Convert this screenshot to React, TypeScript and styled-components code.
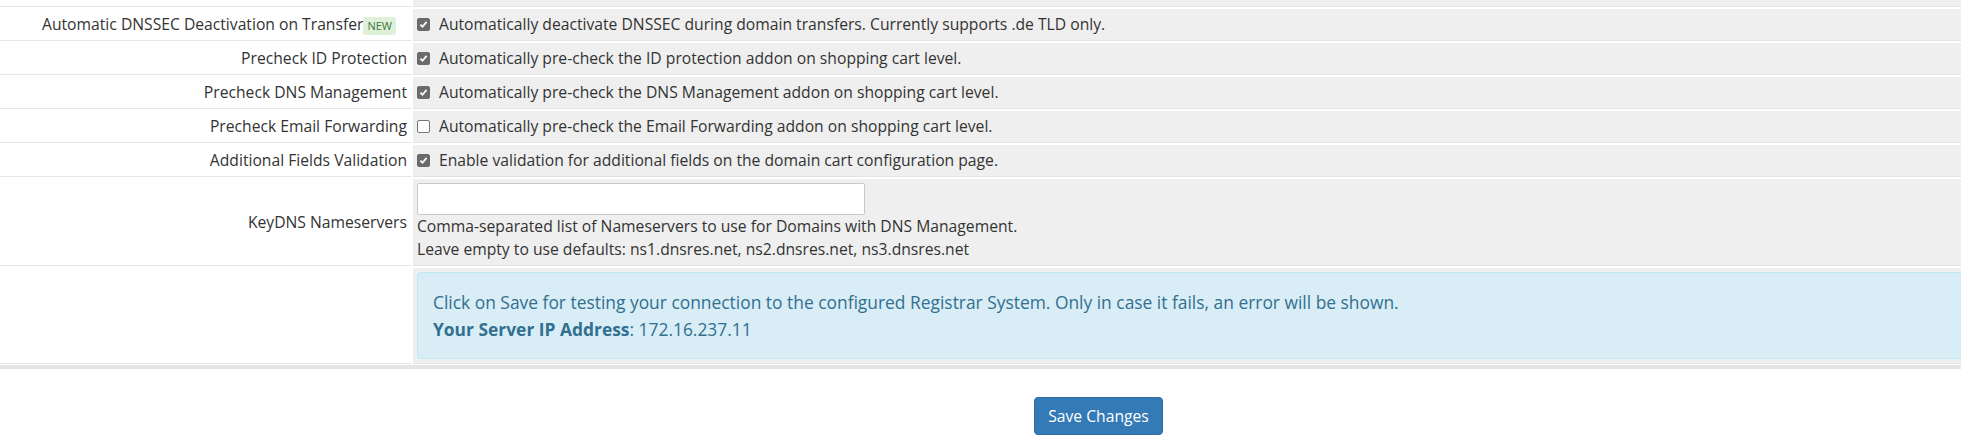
import React from 'react';
import styled, { createGlobalStyle } from 'styled-components';

const GlobalStyle = createGlobalStyle`
  html, body {
    margin: 0;
    padding: 0;
    overflow: hidden;
    background: #fff;
  }
  body {
    font-family: 'Open Sans', 'Noto Sans', sans-serif;
    font-size: 15.68px;
    color: #333;
  }
`;

const Page = styled.div`
  width: 2197px;
  margin-top: -25px;
`;

const Table = styled.div`
  display: flex;
  flex-direction: column;
  gap: 2px;
`;

const Row = styled.div`
  display: grid;
  grid-template-columns: 411px 1fr;
  column-gap: 2px;
`;

const Label = styled.div`
  background: #fff;
  border-bottom: 1px solid #e6e6e6;
  padding: 4px;
  line-height: 23px;
  display: flex;
  align-items: center;
  justify-content: flex-end;
  text-align: right;
  white-space: nowrap;
`;

const Field = styled.div<{ stacked?: boolean }>`
  background: #efefef;
  border-bottom: 1px solid #e3e3e3;
  padding: 4px;
  line-height: 23px;
  display: flex;
  flex-direction: ${(p) => (p.stacked ? 'column' : 'row')};
  align-items: ${(p) => (p.stacked ? 'flex-start' : 'center')};
  white-space: nowrap;
`;

const NewBadge = styled.span`
  display: inline-block;
  background: #dff0d8;
  color: #3c763d;
  font-size: 11px;
  line-height: 18px;
  padding: 0 4px;
  border-radius: 3px;
  margin-right: 11px;
  margin-top: 3px;
`;

const Box = styled.span<{ checked?: boolean }>`
  display: inline-flex;
  align-items: center;
  justify-content: center;
  width: 13px;
  height: 13px;
  box-sizing: border-box;
  border-radius: 2px;
  margin-right: 9px;
  flex-shrink: 0;
  background: ${(p) => (p.checked ? '#6b6b6b' : '#fff')};
  border: 1px solid ${(p) => (p.checked ? '#6b6b6b' : '#767676')};
`;

const TextInput = styled.input`
  width: 448px;
  height: 32px;
  box-sizing: border-box;
  border: 1px solid #c8c8c8;
  border-radius: 2px;
  background: #fff;
  padding: 4px 8px;
  font: inherit;
`;

const Alert = styled.div`
  width: 100%;
  box-sizing: border-box;
  background: #d9edf7;
  border: 1px solid #bce8f1;
  border-radius: 4px;
  color: #31708f;
  font-size: 17.4px;
  line-height: 26.5px;
  padding: 16px 15px;
  white-space: normal;
`;

const Divider = styled.div`
  height: 4px;
  margin-top: 1px;
  background: #e2e6e9;
`;

const Footer = styled.div`
  padding-top: 28px;
  text-align: center;
`;

const SaveButton = styled.button`
  font-family: 'Open Sans', 'Noto Sans', sans-serif;
  font-size: 15.68px;
  line-height: 22.4px;
  padding: 6.72px 13.44px;
  color: #fff;
  background: #337ab7;
  border: 1px solid #2e6da4;
  border-radius: 4px;
`;

const Checkbox = ({ checked }: { checked?: boolean }) => (
  <Box checked={checked}>
    {checked && (
      <svg width="9" height="9" viewBox="0 0 9 9">
        <path d="M1.4 4.6 L3.5 6.7 L7.6 1.9" fill="none" stroke="#fff" strokeWidth="1.7" />
      </svg>
    )}
  </Box>
);

const checkRows = [
  { label: 'Precheck ID Protection', checked: true, text: 'Automatically pre-check the ID protection addon on shopping cart level.' },
  { label: 'Precheck DNS Management', checked: true, text: 'Automatically pre-check the DNS Management addon on shopping cart level.' },
  { label: 'Precheck Email Forwarding', checked: false, text: 'Automatically pre-check the Email Forwarding addon on shopping cart level.' },
  { label: 'Additional Fields Validation', checked: true, text: 'Enable validation for additional fields on the domain cart configuration page.' }
];

export default function App() {
  return (
    <>
      <GlobalStyle />
      <Page>
        <Table>
          <Row>
            <Label>&nbsp;</Label>
            <Field>&nbsp;</Field>
          </Row>
          <Row>
            <Label>
              Automatic DNSSEC Deactivation on Transfer
              <NewBadge>NEW</NewBadge>
            </Label>
            <Field>
              <Checkbox checked />
              Automatically deactivate DNSSEC during domain transfers. Currently supports .de TLD only.
            </Field>
          </Row>
          {checkRows.map((r) => (
            <Row key={r.label}>
              <Label>{r.label}</Label>
              <Field>
                <Checkbox checked={r.checked} />
                {r.text}
              </Field>
            </Row>
          ))}
          <Row>
            <Label>KeyDNS Nameservers</Label>
            <Field stacked>
              <TextInput type="text" />
              <div>Comma-separated list of Nameservers to use for Domains with DNS Management.</div>
              <div>Leave empty to use defaults: ns1.dnsres.net, ns2.dnsres.net, ns3.dnsres.net</div>
            </Field>
          </Row>
          <Row>
            <Label>&nbsp;</Label>
            <Field>
              <Alert>
                Click on Save for testing your connection to the configured Registrar System. Only in case it fails, an error will be shown.
                <br />
                <b>Your Server IP Address</b>: 172.16.237.11
              </Alert>
            </Field>
          </Row>
        </Table>
        <Divider />
        <Footer>
          <SaveButton>Save Changes</SaveButton>
        </Footer>
      </Page>
    </>
  );
}
